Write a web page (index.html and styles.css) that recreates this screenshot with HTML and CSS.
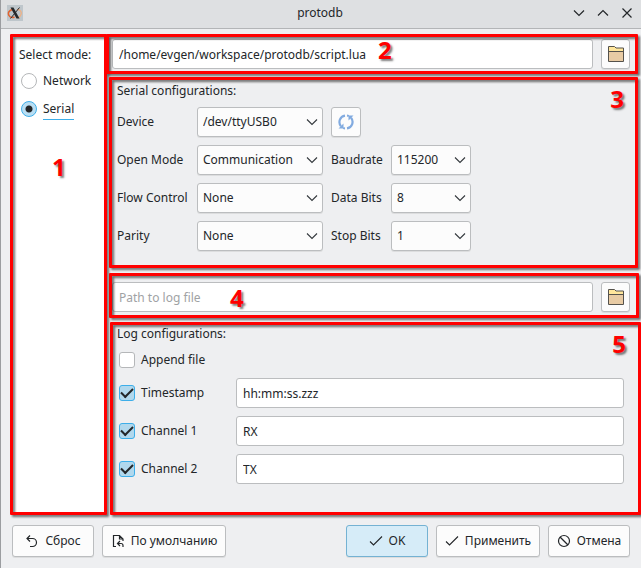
FILE: index.html
```html
<!DOCTYPE html>
<html lang="ru">
<head>
<meta charset="utf-8">
<meta name="viewport" content="width=device-width, initial-scale=1">
<title>protodb</title>
<link rel="stylesheet" href="styles.css">
</head>
<body>
<svg class="defs" aria-hidden="true">
  <symbol id="chevron" viewBox="0 0 12 8"><path d="M1 1.5 6 6.5 11 1.5" fill="none" stroke="#33383c" stroke-width="1.1"/></symbol>
  <symbol id="folder" viewBox="0 0 16 16">
    <path d="M.5 5V.5h6L8 2h7.500v3z" fill="#ffe69b"/>
    <path d="M.5 5.500h15v9.500H.5z" fill="#e8cba4"/>
    <path d="M.5 15.500V.5h6L8 2h7.500v13.500zM.5 5.500h15" fill="none" stroke="#55524c"/>
  </symbol>
  <symbol id="tick" viewBox="0 0 14 12"><path d="M1 6.500 4.500 10 13 1.500" fill="none" stroke="#232629" stroke-width="1.100"/></symbol>
</svg>
<div class="window">
  <header class="titlebar">
    <svg class="logo" viewBox="0 0 16 16" aria-hidden="true">
      <rect width="16" height="16" fill="#bec6cb"/>
      <path d="M6 4.500C2 5 .5 8 2 10.500c1 2 3.500 2.500 5.500 1.500" fill="none" stroke="#e2632f" stroke-width="1.500"/>
      <path d="M10 4.500c3.500 0 5 2.500 4 5s-3 3.500-5 3" fill="none" stroke="#efb184" stroke-width="1.300"/>
      <path d="M3.500 2.500h3l6 11H9.500z" fill="#24282b"/>
      <path d="M12.500 2.500 3.500 13.500" stroke="#24282b" stroke-width="1"/>
    </svg>
    <h1>protodb</h1>
    <div class="window-actions">
      <button type="button" aria-label="Minimize"><svg viewBox="0 0 12 12"><path d="M1 3.500 6 8.500 11 3.500"/></svg></button>
      <button type="button" aria-label="Maximize"><svg viewBox="0 0 12 12"><path d="M1 8.500 6 3.500 11 8.500"/></svg></button>
      <button type="button" aria-label="Close"><svg viewBox="0 0 12 12"><path d="M1.500 1.500l9 9M10.500 1.500l-9 9"/></svg></button>
    </div>
  </header>

  <div class="content">
    <aside class="marked modes">
      <p>Select mode:</p>
      <label><input type="radio" name="mode"><span>Network</span></label>
      <label><input type="radio" name="mode" checked><span>Serial</span></label>
      <b class="mark mark-1">1</b>
    </aside>

    <main>
      <section class="marked path script-path">
        <input type="text" class="field" aria-label="Script file" value="/home/evgen/workspace/protodb/script.lua">
        <button type="button" class="tool" aria-label="Open script"><svg><use href="#folder"/></svg></button>
        <b class="mark mark-2">2</b>
      </section>

      <section class="marked group serial">
        <h2>Serial configurations:</h2>
        <div class="serial-grid">
          <label for="device">Device</label>
          <div class="combo"><select id="device"><option>/dev/ttyUSB0</option></select><svg><use href="#chevron"/></svg></div>
          <button type="button" class="tool refresh" aria-label="Refresh devices">
            <svg viewBox="0 0 16 16"><path d="M7 1.600A6.500 6.500 0 0 0 3 12.200M9 14.400A6.500 6.500 0 0 0 13 3.800" fill="none" stroke="#82abe0" stroke-width="2.200"/><path d="M.5 14.500H5.500V9.500zM15.500 1.500H10.500V6.500z" fill="#82abe0"/><path d="M9 1.600q1 .1 1.800.5M7 14.400q-1-.1-1.800-.5" fill="none" stroke="#82abe0" stroke-width="2"/></svg>
          </button>
          <label class="first" for="open">Open Mode</label>
          <div class="combo"><select id="open"><option>Communication</option></select><svg><use href="#chevron"/></svg></div>
          <label for="baud">Baudrate</label>
          <div class="combo"><select id="baud"><option>115200</option></select><svg><use href="#chevron"/></svg></div>
          <label for="flow">Flow Control</label>
          <div class="combo"><select id="flow"><option>None</option></select><svg><use href="#chevron"/></svg></div>
          <label for="data">Data Bits</label>
          <div class="combo"><select id="data"><option>8</option></select><svg><use href="#chevron"/></svg></div>
          <label for="parity">Parity</label>
          <div class="combo"><select id="parity"><option>None</option></select><svg><use href="#chevron"/></svg></div>
          <label for="stop">Stop Bits</label>
          <div class="combo"><select id="stop"><option>1</option></select><svg><use href="#chevron"/></svg></div>
        </div>
        <b class="mark mark-3">3</b>
      </section>

      <section class="marked path log-path">
        <input type="text" class="field" aria-label="Log file" placeholder="Path to log file">
        <button type="button" class="tool" aria-label="Open log"><svg><use href="#folder"/></svg></button>
        <b class="mark mark-4">4</b>
      </section>

      <section class="marked group log">
        <h2>Log configurations:</h2>
        <label class="check append"><input type="checkbox">Append file</label>
        <div class="log-grid">
          <label class="check"><input type="checkbox" checked>Timestamp</label>
          <input type="text" class="field" aria-label="Timestamp format" value="hh:mm:ss.zzz">
          <label class="check"><input type="checkbox" checked>Channel 1</label>
          <input type="text" class="field" aria-label="Channel 1 name" value="RX">
          <label class="check"><input type="checkbox" checked>Channel 2</label>
          <input type="text" class="field" aria-label="Channel 2 name" value="TX">
        </div>
        <b class="mark mark-5">5</b>
      </section>
    </main>
  </div>

  <footer>
    <button type="button" class="action"><svg viewBox="0 0 14 14"><path d="M5 1.500 2 4.500l3 3M2 4.500h5.500a4 4 0 0 1 0 8H5"/></svg>Сброс</button>
    <button type="button" class="action wide"><svg viewBox="0 0 14 14"><path d="M5 12.500H2.500v-11h6l3.500 3.500v2M8.500 1.500v3.500H12M9 7 6.500 9.500 9 12M6.500 9.500h3.500a2 2 0 0 1 2 2v1.500"/></svg>По умолчанию</button>
    <span class="spacer"></span>
    <button type="button" class="action default"><svg><use href="#tick"/></svg>OK</button>
    <button type="button" class="action medium"><svg><use href="#tick"/></svg>Применить</button>
    <button type="button" class="action"><svg viewBox="0 0 14 14"><circle cx="7" cy="7" r="5.500"/><path d="M3 3l8 8"/></svg>Отмена</button>
  </footer>
</div>
</body>
</html>
```
FILE: styles.css
```css
* {
  box-sizing: border-box;
}

body {
  margin: 0;
  overflow: hidden;
  background: #eeeff1;
  color: #232629;
  font: 12px/18px "Noto Sans", sans-serif;
}

button, input, select {
  margin: 0;
  color: inherit;
  font: inherit;
}

h1, h2, p {
  margin: 0;
  font-size: inherit;
  font-weight: 400;
}

.defs {
  position: absolute;
  width: 0;
  height: 0;
}

.window {
  display: flex;
  flex-direction: column;
  min-height: 100vh;
  border-left: 1px solid #9b9da0;
}

.titlebar {
  display: grid;
  grid-template-columns: 1fr auto 1fr;
  align-items: center;
  height: 29px;
  padding: 0 8px 2px 6px;
  border-bottom: 1px solid #b3b5b7;
  background: #dee0e2;
}

.logo {
  width: 16px;
  height: 16px;
}

.window-actions {
  display: flex;
  justify-content: flex-end;
  gap: 12px;
}

.window-actions button {
  display: flex;
  padding: 0;
  border: 0;
  background: none;
}

.window-actions svg {
  width: 12px;
  height: 12px;
  fill: none;
  stroke: #232629;
  stroke-width: 1.200;
}

.content {
  display: flex;
  flex: 1;
  gap: 2px;
  padding: 5px 3px 0 9px;
}

main {
  flex: 1;
  display: flex;
  flex-direction: column;
}

/* Red outline round each numbered area */
.marked {
  position: relative;
}

.marked::after {
  content: "";
  position: absolute;
  inset: 0;
  border: 3px solid #f00;
  border-radius: 1px;
  filter: drop-shadow(2px 2px 1px rgba(0, 0, 0, .55));
  pointer-events: none;
}

.mark {
  position: absolute;
  color: #f00;
  font-size: 24px;
  line-height: 24px;
  text-shadow: 2px 2px 2px rgba(0, 0, 0, .5);
  pointer-events: none;
}

.mark-1 { left: 42px; top: 121px; }
.mark-2 { left: 269px; top: 4px; }
.mark-3 { right: 14px; top: 10px; }
.mark-4 { left: 121px; top: 13px; }
.mark-5 { right: 12px; top: 10px; }

.modes {
  display: flex;
  flex-direction: column;
  gap: 10px;
  width: 97px;
  padding: 12px 4px 0 9px;
  background: #fff;
}

.modes label {
  display: flex;
  align-items: center;
  gap: 6px;
  padding-left: 2px;
}

.modes p {
  margin-bottom: -2px;
}

input[type="radio"], input[type="checkbox"] {
  appearance: none;
  flex: none;
  width: 16px;
  height: 16px;
  border: 1px solid #b5b7b9;
  background: #fff;
}

input[type="radio"] {
  border-radius: 50%;
}

input[type="radio"]:checked {
  border-color: #3daee9;
  background: radial-gradient(circle, #232629 3px, #b9def3 4px);
}

input[type="radio"]:checked + span {
  box-shadow: 0 1px #fff, 0 2px #3daee9;
}

input[type="checkbox"] {
  display: grid;
  place-items: center;
  border-radius: 3px;
}

input[type="checkbox"]:checked {
  border-color: #3daee9;
  background: #b1d8ed;
}

input[type="checkbox"]:checked::before {
  content: "";
  width: 10px;
  height: 5px;
  margin-bottom: 4px;
  border: solid #232629;
  border-width: 0 0 2px 2px;
  transform: rotate(-45deg);
}

.path {
  display: flex;
  gap: 8px;
  padding: 5px 8px 5px 3px;
}

.field {
  flex: 1;
  min-width: 0;
  height: 30px;
  padding: 0 6px;
  border: 1px solid #bbbdbf;
  border-radius: 3px;
  background: #fff;
}

.field::placeholder {
  color: #a0a2a4;
  opacity: 1;
}

.tool {
  display: grid;
  place-items: center;
  width: 29px;
  height: 30px;
  padding: 0;
  border: 1px solid #bbbdbf;
  border-radius: 3px;
  background: #fcfcfc;
  box-shadow: 0 1px #dcddde;
}

.tool svg {
  width: 16px;
  height: 16px;
}

.script-path::after { left: -3px; }

.serial {
  margin-top: 3px;
  padding: 5px 8px 17px;
}

.serial-grid {
  display: grid;
  grid-template-columns: 72px 126px 52px 80px;
  gap: 8px;
  align-items: center;
  margin-top: 7px;
  white-space: nowrap;
}

.first { grid-column: 1; }

.refresh { width: 30px; }

.combo {
  position: relative;
}

.combo select {
  display: block;
  appearance: none;
  width: 100%;
  height: 30px;
  padding: 0 5px;
  border: 1px solid #bbbdbf;
  border-radius: 3px;
  background: #fcfcfc;
  box-shadow: 0 1px #dcddde;
}

.combo svg {
  position: absolute;
  top: 11px;
  right: 5px;
  width: 12px;
  height: 8px;
  pointer-events: none;
}

.log-path {
  margin-top: 5px;
  padding-top: 9px;
  padding-bottom: 6px;
}

.log-path::after { right: -1px; }

.log {
  flex: 1;
  margin-top: 4px;
  padding: 3px 14px 31px 8px;
}

.log::after {
  left: 1px;
  right: -3px;
}

.check {
  display: flex;
  align-items: center;
  gap: 6px;
  padding-left: 2px;
}

.append {
  margin: 8px 0 9px;
}

.log-grid {
  display: grid;
  grid-template-columns: 111px 1fr;
  gap: 8px;
}

footer {
  display: flex;
  gap: 8px;
  padding: 10px 11px 11px;
}

.spacer { flex: 1; }

.action {
  display: flex;
  align-items: center;
  justify-content: center;
  gap: 6px;
  width: 82px;
  height: 32px;
  padding: 0;
  border: 1px solid #bbbdbf;
  border-radius: 3px;
  background: #fcfcfc;
  box-shadow: 0 1px #dcddde;
  white-space: nowrap;
}

.wide { width: 124px; }

.medium { width: 104px; }

.default {
  border-color: #74b2d3;
  background: #d6ecf8;
}

.action svg {
  width: 14px;
  height: 14px;
  fill: none;
  stroke: #232629;
  stroke-width: 1.200;
}
```
